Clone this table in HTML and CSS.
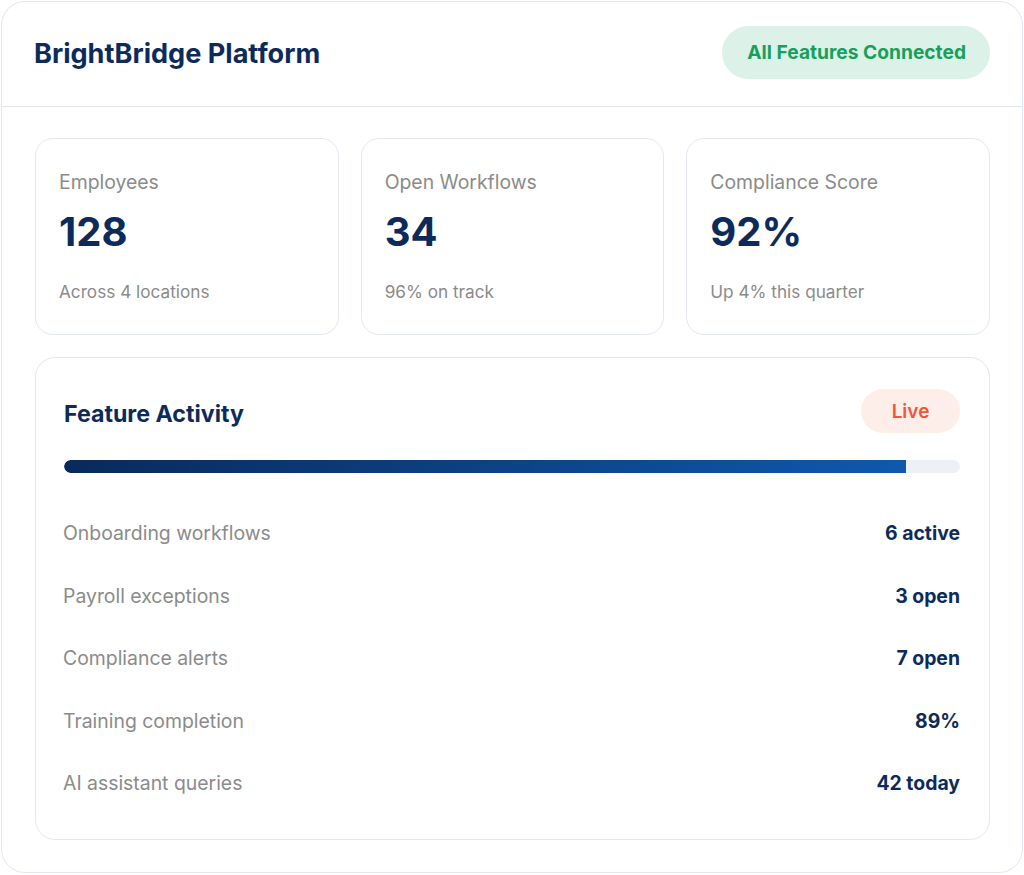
FILE: index.html
```html
<!DOCTYPE html>
<html lang="en">
<head>
<meta charset="utf-8">
<title>BrightBridge Platform</title>
<link rel="stylesheet" href="styles.css">
</head>
<body>
<div class="shell">
  <header class="shell-header">
    <h1 class="brand">BrightBridge Platform</h1>
    <span class="pill pill-green">All Features Connected</span>
  </header>
  <main class="shell-body">
    <section class="stats">
      <div class="stat">
        <div class="stat-label">Employees</div>
        <div class="stat-value">128</div>
        <div class="stat-sub">Across 4 locations</div>
      </div>
      <div class="stat">
        <div class="stat-label">Open Workflows</div>
        <div class="stat-value">34</div>
        <div class="stat-sub">96% on track</div>
      </div>
      <div class="stat">
        <div class="stat-label">Compliance Score</div>
        <div class="stat-value">92%</div>
        <div class="stat-sub">Up 4% this quarter</div>
      </div>
    </section>
    <section class="activity">
      <div class="activity-head">
        <h2 class="activity-title">Feature Activity</h2>
        <span class="pill pill-live">Live</span>
      </div>
      <div class="bar"><div class="bar-fill" style="width: 94%"></div></div>
      <ul class="rows">
        <li class="row"><span class="row-label">Onboarding workflows</span><span class="row-value">6 active</span></li>
        <li class="row"><span class="row-label">Payroll exceptions</span><span class="row-value">3 open</span></li>
        <li class="row"><span class="row-label">Compliance alerts</span><span class="row-value">7 open</span></li>
        <li class="row"><span class="row-label">Training completion</span><span class="row-value">89%</span></li>
        <li class="row"><span class="row-label">AI assistant queries</span><span class="row-value">42 today</span></li>
      </ul>
    </section>
  </main>
</div>
</body>
</html>
```

FILE: styles.css
```css
* { box-sizing: border-box; }

html, body {
  margin: 0;
  padding: 0;
  background: #ffffff;
}

body {
  padding: 1px;
  font-family: Inter, "Noto Sans", "Liberation Sans", sans-serif;
  color: #0c2b5b;
}

.shell {
  width: 1022px;
  height: 872px;
  border: 1.5px solid #e2e7f1;
  border-radius: 24px;
  background: #ffffff;
  overflow: hidden;
}

.shell-header {
  height: 105px;
  display: flex;
  align-items: center;
  justify-content: space-between;
  padding: 0 32px 0 32px;
  border-bottom: 1.5px solid #e2e7f1;
}

.brand {
  margin: 0;
  font-size: 27.1px;
  line-height: 32px;
  font-weight: 700;
  color: #0c2b5b;
}

.pill {
  display: inline-flex;
  align-items: center;
  justify-content: center;
  border-radius: 999px;
  font-weight: 700;
}

.pill-green {
  height: 53px;
  padding: 0 24px 0 25px;
  background: #dcf1e7;
  color: #17a05c;
  font-size: 19.2px;
  margin-top: -4px;
}

.shell-body {
  padding: 31px 32px 32px 33px;
  display: flex;
  flex-direction: column;
  gap: 22px;
}

.stats {
  display: grid;
  grid-template-columns: repeat(3, 1fr);
  gap: 22px;
}

.stat {
  height: 197px;
  border: 1.5px solid #e2e7f1;
  border-radius: 18px;
  padding: 31px 23px 0 23px;
}

.stat-label {
  font-size: 19.4px;
  line-height: 24px;
  color: #8b8b8b;
}

.stat-value {
  margin-top: 14px;
  font-size: 40px;
  line-height: 48px;
  font-weight: 700;
  color: #0c2b5b;
}

.stat-sub {
  margin-top: 25px;
  font-size: 17.2px;
  line-height: 22px;
  color: #8b8b8b;
}

.activity {
  height: 483px;
  border: 1.5px solid #e2e7f1;
  border-radius: 20px;
  padding: 31px 29px 0 28px;
}

.activity-head {
  display: flex;
  align-items: center;
  justify-content: space-between;
  height: 44px;
}

.activity-title {
  margin: 5px 0 0;
  font-size: 23.2px;
  font-weight: 700;
  color: #0c2b5b;
}

.pill-live {
  height: 44px;
  width: 99px;
  background: #fdeee9;
  color: #f1553d;
  font-size: 19px;
  font-weight: 600;
}

.bar {
  margin-top: 27px;
  height: 13px;
  border-radius: 999px;
  background: #edf0f5;
  overflow: hidden;
}

.bar-fill {
  height: 100%;
  border-radius: 999px 0 0 999px;
  background: linear-gradient(90deg, #082a5b 0%, #0c3f80 45%, #0f58ae 100%);
}

.rows {
  list-style: none;
  margin: 29px 0 0;
  padding: 0;
}

.row {
  height: 62.5px;
  display: flex;
  align-items: center;
  justify-content: space-between;
  font-size: 19.4px;
  line-height: 24px;
}

.row-label {
  color: #8b8b8b;
  margin-left: -1px;
}

.row-value {
  font-weight: 700;
  color: #0c2b5b;
}
```
